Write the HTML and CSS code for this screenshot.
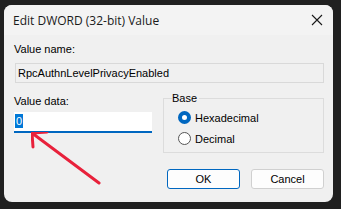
FILE: index.html
```html
<!DOCTYPE html>
<html>
<head>
<meta charset="utf-8">
<link rel="stylesheet" href="styles.css">
</head>
<body>
<div class="window">
  <div class="titlebar">
    <span class="title">Edit DWORD (32-bit) Value</span>
    <svg class="close" width="12" height="12" viewBox="0 0 12 12"><path d="M1 1L11 11M11 1L1 11" stroke="#1a1a1a" stroke-width="1.1"/></svg>
  </div>
  <div class="content">
    <div class="label name-label">Value name:</div>
    <div class="namefield">RpcAuthnLevelPrivacyEnabled</div>
    <div class="mid">
      <div class="datacol">
        <div class="label">Value data:</div>
        <div class="datafield"><span class="sel">0</span></div>
      </div>
      <fieldset class="base">
        <legend>Base</legend>
        <div class="radio first"><span class="dot on"></span>Hexadecimal</div>
        <div class="radio"><span class="dot"></span>Decimal</div>
      </fieldset>
    </div>
    <div class="buttons">
      <div class="btn default">OK</div>
      <div class="btn">Cancel</div>
    </div>
  </div>
  <svg class="arrow" width="80" height="60" viewBox="0 0 80 60"><path d="M1 1L68 51M1 1L16 0M1 1L2 15" stroke="#e8213b" stroke-width="3" fill="none" stroke-linecap="round"/></svg>
</div>
</body>
</html>
```
FILE: styles.css
```css
html, body { margin: 0; padding: 0; }
body {
  background: #202020;
  width: 341px;
  height: 209px;
  overflow: hidden;
  font-family: "Liberation Sans", Arial, sans-serif;
  font-size: 11px;
  color: #000;
}
.window {
  position: relative;
  margin: 5px 0 0 4px;
  width: 329px;
  height: 197px;
  border-radius: 8px;
  background: #f0f0f0;
  overflow: hidden;
}
.titlebar {
  height: 30px;
  background: #f3f3f3;
  display: flex;
  align-items: center;
  justify-content: space-between;
  padding: 0 9px 0 9px;
}
.title {
  font-family: "Open Sans", "Noto Sans", sans-serif;
  font-size: 12px;
  color: #1a1a1a;
}
.close { margin-right: 1px; }
.content {
  padding: 7px 9px 0 10px;
}
.label { height: 14px; line-height: 14px; }
.name-label { margin-bottom: 7px; }
.namefield {
  height: 18px;
  line-height: 18px;
  border: 1px solid #d9d9d9;
  margin-left: 1px;
  padding-left: 2px;
  background: #f0f0f0;
}
.mid {
  display: flex;
  margin-top: 9px;
  gap: 11px;
}
.datacol { width: 138px; padding-top: 2px; }
.datacol .label { margin-bottom: 4px; }
.datafield {
  height: 17px;
  background: #fff;
  border-bottom: 2px solid #0067c0;
  padding: 2px 0 0 1px;
  box-sizing: content-box;
}
.sel {
  background: #0078d7;
  color: #fff;
  display: inline-block;
  height: 14px;
  line-height: 14px;
  padding: 0 1px;
}
.base {
  margin: 0;
  flex: 1;
  border: 1px solid #dcdcdc;
  padding: 0 0 0 14px;
  height: 61px;
  box-sizing: border-box;
}
.base legend { padding: 0 2px 0 0; margin-left: -6px; }
.radio { display: flex; align-items: center; height: 21px; }
.radio.first { margin-top: 3px; }
.dot {
  width: 13px; height: 13px;
  border-radius: 50%;
  border: 1px solid #555;
  background: #fff;
  margin-right: 4px;
  box-sizing: border-box;
}
.dot.on {
  border: 4px solid #0067c0;
  background: #fff;
}
.buttons {
  display: flex;
  justify-content: flex-end;
  gap: 11px;
  margin-top: 16px;
}
.btn {
  width: 71px;
  height: 18px;
  line-height: 18px;
  text-align: center;
  background: #fdfdfd;
  border: 1px solid #d0d0d0;
  border-radius: 3px;
}
.btn.default { border-color: #0067c0; }
.arrow { position: absolute; left: 27px; top: 127px; }
```
